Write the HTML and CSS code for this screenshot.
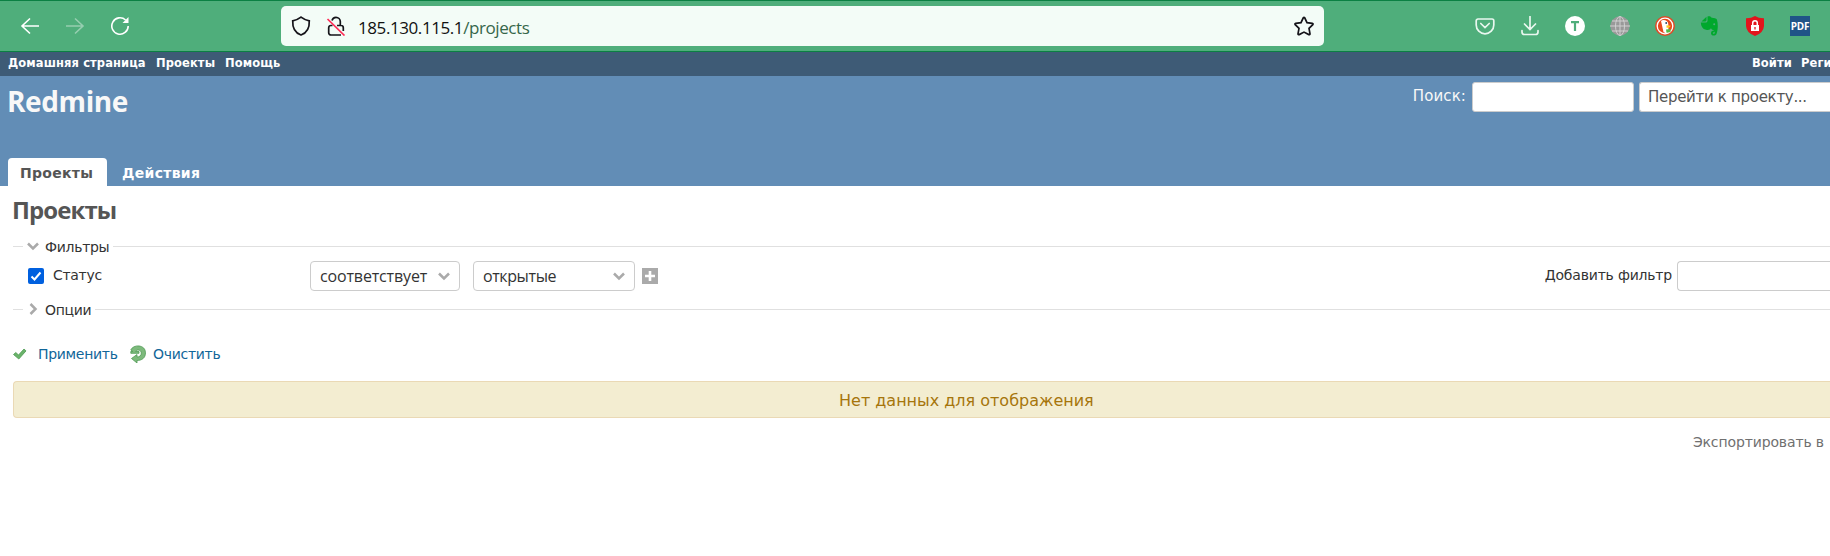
FILE: index.html
```
<!DOCTYPE html>
<html lang="ru">
<head>
<meta charset="utf-8">
<title>Проекты - Redmine</title>
<link rel="stylesheet" href="styles.css">
</head>
<body>
<div class="browser">
  <svg class="nav-icon" viewBox="0 0 20 20"><path d="M19 10H2M10 2.500L2 10l8 7.500"/></svg>
  <svg class="nav-icon disabled" viewBox="0 0 20 20"><path d="M1 10h17M10 2.500l8 7.500-8 7.500"/></svg>
  <svg class="nav-icon" viewBox="0 0 20 20"><path d="M18.200 10a8.200 8.200 0 1 1-2.600-6"/><path class="solid" d="M18.500 1v6h-6z"/></svg>
  <div class="address">
    <svg class="shield" viewBox="0 0 20 20"><path d="M10 1.200C7.500 3.200 4.500 4.300 1.700 4.800C1.400 12 4 17 10 19c6-2 8.600-7 8.300-14.200C15.500 4.300 12.500 3.200 10 1.200z"/></svg>
    <svg class="lock" viewBox="0 0 20 20"><path d="M6 4.500C6.500 2.500 8 1.300 10 1.300a4.300 4.300 0 0 1 4.300 4.300V9M11 9.500h4a2.300 2.300 0 0 1 2.300 2.300V15M15 19H5a2.300 2.300 0 0 1-2.300-2.300v-5A2.300 2.300 0 0 1 5 9.500h1.500"/><path class="slash" d="M1.500 3l17 16.500"/></svg>
    <span class="url">185.130.115.1<span class="path">/projects</span></span>
    <svg class="star" viewBox="0 0 20 20"><path d="M9.300 1.800q.7-1 1.400 0L13 6.600l5.300.7q1.200.4.500 1.400L15 12.400l1 5.400q0 1.200-1.200.8L10 16.100l-4.800 2.500q-1.200.4-1.200-.8l1-5.400L1.200 8.700q-.7-1 .5-1.400L7 6.600z"/></svg>
  </div>
  <div class="extensions">
    <svg viewBox="0 0 20 20"><path class="line" d="M3 3h14a1.800 1.800 0 0 1 1.800 1.800V9a8.800 8.800 0 0 1-17.600 0V4.800A1.800 1.800 0 0 1 3 3zM5.800 7.500L10 11.500l4.200-4"/></svg>
    <svg viewBox="0 0 20 20"><path class="line" d="M10 .5v13M4.500 8l5.500 5.500L15.500 8M2 14.500V16a2.500 2.500 0 0 0 2.500 2.500h11A2.500 2.500 0 0 0 18 16v-1.500"/></svg>
    <svg viewBox="0 0 20 20"><circle cx="10" cy="10" r="10" fill="#fff"/><path d="M6 6.200h8M10 6v9" stroke="#4fae7b" stroke-width="2.200" fill="none"/></svg>
    <svg viewBox="0 0 20 20"><circle cx="10" cy="10" r="9.700" fill="#999"/><g fill="none" stroke="#d0d0d0"><ellipse cx="10" cy="10" rx="4.500" ry="9.500"/><path d="M10 0v20M0 10h20M2 5h16M2 15h16"/></g></svg>
    <svg viewBox="0 0 20 20"><circle cx="10" cy="10" r="10" fill="#de4b27"/><circle cx="10" cy="10" r="7.800" fill="#e8481c" stroke="#fff" stroke-width="1.300"/><path d="M6 5C8 2.800 13 4 13.300 8l.2 8-2.500 1.500L8.500 16z" fill="#fff"/><path d="M11.500 9.200l4.500.5-2 2h-2.500z" fill="#fc2"/><circle cx="11.200" cy="7" r=".9" fill="#246"/><path d="M11 13.500l4.500-.5v3l-4 .8z" fill="#5b4"/></svg>
    <svg viewBox="0 0 20 20" fill="#00a82d"><path d="M1.500 5.500L6.500.7V4q0 1.500-1.500 1.500z"/><path d="M7.500.5C10 0 11 .8 11.500 1.700c2 .2 5 .3 5.500 2 1.200 4.500 1 10-.5 14.300-1.200 2.300-5.500 2.200-5.500-.8 0-2.500 2-3 3.700-2.700v1.800c-1.200-.2-2 .2-1.800 1 .2.900 1.600.7 1.900-.3.400-1.500-.2-2.800-1.600-3-1.400-.2-2-.8-2.200-2-.8 2-2.500 2.200-5 1.800C2.500 13 1 10.500.8 6.500h4.900c1 0 1.800-.8 1.800-1.800z"/><circle cx="14.200" cy="8.300" r="1" fill="#4fae7b"/></svg>
    <svg viewBox="0 0 20 20"><path d="M10 0q4 2.500 9 2.300V10q-.5 7-9 10Q1.500 17 1 10V2.300Q6 2.500 10 0z" fill="#e3141c"/><path d="M6 9h8v6H6z" fill="#fff"/><path d="M7.700 9V7a2.300 2.300 0 0 1 4.600 0v2" stroke="#fff" stroke-width="1.500" fill="none"/><path d="M10 11v2.500" stroke="#e3141c" stroke-width="1.300"/></svg>
    <span class="pdf">PDF</span>
  </div>
</div>

<div class="top-menu">
  <a class="home">Домашняя страница</a><a class="projects">Проекты</a><a class="help">Помощь</a>
  <span class="account"><a class="login">Войти</a><a class="register">Реги</a></span>
</div>

<div class="header">
  <div class="header-row">
    <h1>Redmine</h1>
    <span class="search-label">Поиск:</span>
    <input class="search" type="text" aria-label="Поиск">
    <div class="jump">Перейти к проекту...</div>
  </div>
  <div class="tabs"><a class="tab selected">Проекты</a><a class="tab">Действия</a></div>
</div>

<div class="content">
  <h2>Проекты</h2>
  <div class="legend"><svg class="chev" viewBox="0 0 12 12"><path d="M1 3.500l5 5 5-5"/></svg><span>Фильтры</span></div>
  <div class="filter-row">
    <span class="check"><svg viewBox="0 0 16 16"><path d="M3.500 8.500l3 3 6-7"/></svg></span>
    <span class="status">Статус</span>
    <div class="select op"><span>соответствует</span><svg class="chev" viewBox="0 0 12 12"><path d="M1 3.500l5 5 5-5"/></svg></div>
    <div class="select val"><span>открытые</span><svg class="chev" viewBox="0 0 12 12"><path d="M1 3.500l5 5 5-5"/></svg></div>
    <svg class="plus" viewBox="0 0 16 16"><path d="M0 0h16v16H0z" fill="#aaa"/><path d="M8 3v10M3 8h10" stroke="#fff" stroke-width="2.600"/></svg>
    <span class="add-label">Добавить фильтр</span>
    <div class="add-select"></div>
  </div>
  <div class="legend"><svg class="chev" viewBox="0 0 12 12"><path d="M3.500 1l5 5-5 5"/></svg><span>Опции</span></div>
  <div class="buttons">
    <svg class="apply-icon" viewBox="0 0 14 12"><path d="M.5 6.500L2.800 4.500 5.500 7 11 1l2 1.900L5.800 11z" fill="#6bb36b" stroke="#4c9a52" stroke-width=".8"/></svg>
    <a class="apply">Применить</a>
    <svg class="reload-icon" viewBox="0 0 16 18"><path d="M.8 5C3-.8 15.500-1 15.500 7.800c0 5-3.500 7.700-8.500 7.700V18l-5.500-4.500L7 9.500V12c2.500 0 4.300-1.300 4.300-4 0-3.300-4.600-3.800-5.800-1.500H9V8.300H.8V6.500h2z" fill="#7dba7c" stroke="#4f9b54" stroke-width=".8"/></svg>
    <a class="clear">Очистить</a>
  </div>
  <div class="nodata"><span>Нет данных для отображения</span></div>
  <div class="export"><span>Экспортировать в</span></div>
</div>
</body>
</html>
```

FILE: styles.css
```
* { box-sizing: border-box; }
html, body { margin: 0; height: 556px; overflow: hidden; }
body { background: #fff; color: #333; font: 14px/20px "DejaVu Sans", sans-serif; white-space: nowrap; }
svg { display: block; flex: none; }
h1, h2 { margin: 0; font-family: "Open Sans", "Noto Sans", sans-serif; }

.browser { height: 52px; background: #4fae7b; border-top: 1px solid #0b8043; border-bottom: 1px solid #0b8043; display: flex; align-items: center; padding-left: 20px; }
.nav-icon { width: 20px; height: 20px; margin-right: 25px; fill: none; stroke: #fff; stroke-width: 1.6; }
.nav-icon .solid { fill: #fff; stroke: none; }
.nav-icon.disabled { opacity: .4; }
.address { display: flex; align-items: center; width: 1043px; height: 40px; margin-left: 126px; padding: 0 10px; background: #f3fcf7; border-radius: 5px; }
.address svg { width: 20px; height: 20px; fill: none; stroke: #15141a; stroke-width: 1.7; }
.address .lock { margin-left: 15px; }
.address .lock .slash { stroke: #ff2a55; }
.url { margin: 3px 0 0 12px; color: #111; font: 17px/24px "Open Sans", sans-serif; letter-spacing: -.42px; }
.path { color: #35664a; }
.address .star { margin-left: auto; }
.extensions { display: flex; align-items: center; gap: 25px; margin-left: 151px; }
.extensions svg { width: 20px; height: 20px; }
.line { fill: none; stroke: #e9f7ef; stroke-width: 1.7; stroke-linecap: round; }
.pdf { width: 20px; height: 20px; background: #205487; color: #fff; font: bold 10px/20px "Open Sans", sans-serif; letter-spacing: -.2px; text-align: center; }

.top-menu { display: flex; height: 24px; padding-left: 8px; background: #3e5b76; color: #fff; font-weight: bold; font-size: 11.500px; line-height: 22px; letter-spacing: .1px; }
.top-menu a { flex: none; }
.home { width: 148px; }
.projects { width: 69px; }
.account { display: flex; width: 78px; margin-left: auto; overflow: hidden; }
.login { width: 49px; }

.header { display: flex; flex-direction: column; justify-content: space-between; height: 110px; background: #628db6; color: #f8f8f8; }
.header-row { display: flex; align-items: flex-start; padding: 6px 0 0 7px; overflow: hidden; }
h1 { font-size: 28px; line-height: 38px; font-weight: 700; letter-spacing: -.4px; }
.search-label { margin-left: auto; font-size: 15px; line-height: 28px; letter-spacing: .1px; }
.search { width: 162px; height: 30px; margin: 0 5px 0 6px; border: 1px solid #ccc; border-radius: 3px; background: #fff; }
.jump { flex: none; width: 191px; height: 30px; padding-left: 8px; border: 1px solid #ccc; border-radius: 3px 0 0 3px; border-right: 0; background: #fff; color: #555; font-size: 15px; line-height: 29px; letter-spacing: -.3px; }
.tabs { display: flex; padding-left: 8px; font-size: 14px; font-weight: bold; letter-spacing: .3px; }
.tab { height: 28px; padding: 0 2px 0 15px; line-height: 30px; color: #fff; }
.tab.selected { width: 99px; padding: 0 0 0 12px; border-radius: 4px 4px 0 0; background: #fff; color: #555; }

.content { padding-left: 13px; }
h2 { height: 42px; padding-top: 7px; margin-left: -1px; font-size: 24px; line-height: 34px; font-weight: 700; letter-spacing: -.9px; color: #555; }
.legend { display: flex; align-items: center; height: 20px; letter-spacing: -.3px; }
.legend::before { content: ""; width: 10px; height: 1px; background: #e0e0e0; }
.legend::after { content: ""; flex: 1; height: 1px; margin-left: 4px; background: #e0e0e0; }
.legend span { line-height: 20px; padding-top: 1px; margin-left: 6px; }
h2 + .legend { margin-top: 8px; }
.chev { width: 12px; height: 12px; fill: none; stroke: #aaa; stroke-width: 2.500; }
.legend .chev { margin-left: 4px; }
.filter-row { display: flex; align-items: center; height: 40px; padding-left: 15px; margin-bottom: 3px; }
.check { width: 16px; height: 16px; border-radius: 2px; background: #0060df; }
.check path { fill: none; stroke: #fff; stroke-width: 2; }
.status { width: 257px; margin-left: 9px; padding-bottom: 2px; letter-spacing: -.3px; }
.select { display: flex; align-items: center; justify-content: space-between; height: 30px; padding: 0 9px; border: 1px solid #ccc; border-radius: 4px; font: 16px/30px "Open Sans", sans-serif; letter-spacing: -.15px; }
.op { width: 150px; }
.val { width: 162px; margin-left: 13px; letter-spacing: -.4px; }
.plus { width: 16px; height: 16px; margin-left: 7px; }
.add-label { margin-left: auto; padding-bottom: 2px; letter-spacing: -.2px; }
.add-select { width: 153px; height: 30px; margin-left: 5px; border: 1px solid #ccc; border-right: 0; border-radius: 4px 0 0 4px; }
.buttons { display: flex; align-items: center; height: 20px; margin-top: 25px; color: #169; letter-spacing: -.3px; }
.apply-icon { width: 14px; height: 12px; }
.apply { width: 92px; margin-left: 11px; }
.reload-icon { width: 16px; height: 18px; }
.clear { margin-left: 7px; }
.nodata { height: 37px; margin-top: 17px; border: 1px solid #ead9b5; border-right: 0; border-radius: 4px 0 0 4px; background: #f3edd1; color: #a6750c; font-size: 16px; line-height: 37px; padding-left: 825px; }
.export { display: flex; justify-content: flex-end; margin-top: 14px; padding-right: 6px; color: #707070; letter-spacing: -.13px; }
```
